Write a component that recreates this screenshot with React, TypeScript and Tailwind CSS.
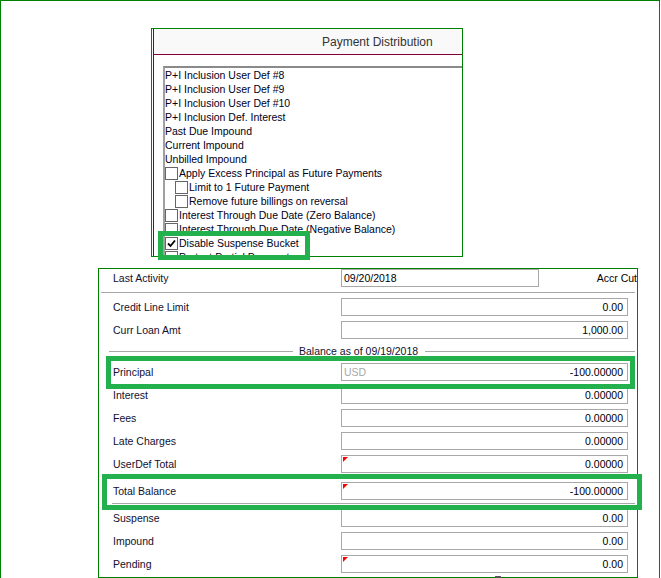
import React from 'react'

const listItems: { text: string; check?: 'none' | 'off' | 'on'; indent?: boolean }[] = [
  { text: 'P+I Inclusion User Def #8' },
  { text: 'P+I Inclusion User Def #9' },
  { text: 'P+I Inclusion User Def #10' },
  { text: 'P+I Inclusion Def. Interest' },
  { text: 'Past Due Impound' },
  { text: 'Current Impound' },
  { text: 'Unbilled Impound' },
  { text: 'Apply Excess Principal as Future Payments', check: 'off' },
  { text: 'Limit to 1 Future Payment', check: 'off', indent: true },
  { text: 'Remove future billings on reversal', check: 'off', indent: true },
  { text: 'Interest Through Due Date (Zero Balance)', check: 'off' },
  { text: 'Interest Through Due Date (Negative Balance)', check: 'off' },
  { text: 'Disable Suspense Bucket', check: 'on' },
  { text: 'Protect Partial Payments', check: 'off' },
]

function CheckBox({ on }: { on?: boolean }) {
  return (
    <div className="w-[13px] h-[13px] border border-[#666] bg-white flex items-center justify-center shrink-0">
      {on && (
        <svg width="9" height="9" viewBox="0 0 9 9">
          <path d="M1 4.5 L3.5 7 L8 1.5" fill="none" stroke="#000" strokeWidth="1.8" />
        </svg>
      )}
    </div>
  )
}

function Flag() {
  return (
    <svg className="absolute left-[1px] top-[1px]" width="5" height="5" viewBox="0 0 5 5">
      <polygon points="0,0 5,0 0,5" fill="#ff0000" />
    </svg>
  )
}

function Field({ value, flag, usd }: { value: string; flag?: boolean; usd?: boolean }) {
  return (
    <div className="relative w-[287px] h-[18px] border border-[#a8a8a8] bg-white flex items-center justify-end pr-[4px] text-black">
      {flag && <Flag />}
      {usd && <span className="absolute left-[2px] text-[#a8a8a8]">USD</span>}
      {value}
    </div>
  )
}

function Row({ label, value, flag, usd, mt = 'mt-[5px]' }: { label: string; value: string; flag?: boolean; usd?: boolean; mt?: string }) {
  return (
    <div className={`flex items-center h-[18px] ${mt}`}>
      <div className="w-[242px] pl-[14px] text-[#101030]">{label}</div>
      <Field value={value} flag={flag} usd={usd} />
    </div>
  )
}

export default function App() {
  return (
    <div className="w-[660px] h-[578px] border-l border-t border-r border-[#008000] bg-white relative overflow-hidden font-['Liberation_Sans',Arial,sans-serif] text-[10.5px] leading-[14px]">
      {/* Payment distribution panel */}
      <div className="ml-[150px] mt-[27px] w-[312px] h-[229px] border border-[#008000] overflow-hidden flex">
        <div className="ml-px w-px bg-[#80003c] shrink-0" />
        <div className="flex-1 flex flex-col min-w-0">
          <div className="h-[26px] shrink-0 bg-[#f9f9f9] border-b border-[#80003c] flex items-center pl-[168px] text-[12px] text-[#333]">
            Payment Distribution
          </div>
          <div className="ml-[9px] mt-[11px] border-t-2 border-l-2 border-t-[#8a8a8a] border-l-[#a0a0a0] flex-1 bg-white">
            {listItems.map((it, i) => (
              <div key={i} className="h-[14px] flex items-center whitespace-nowrap text-[#000020]">
                {it.check ? (
                  <>
                    <div className={it.indent ? 'ml-[10px]' : ''}>
                      <CheckBox on={it.check === 'on'} />
                    </div>
                    <span className="ml-[1px]">{it.text}</span>
                  </>
                ) : (
                  <span>{it.text}</span>
                )}
              </div>
            ))}
          </div>
        </div>
      </div>

      {/* Loan balance panel */}
      <div className="ml-[97px] mt-[11px] w-[540px] h-[310px] border border-[#008000] overflow-hidden">
        <div className="flex items-center h-[18px]">
          <div className="w-[242px] pl-[14px] text-[#101030]">Last Activity</div>
          <div className="w-[198px] h-[18px] border border-[#a8a8a8] flex items-center pl-[2px] text-black">09/20/2018</div>
          <div className="flex-1 flex justify-end whitespace-nowrap text-black">Accr Cut</div>
        </div>
        <div className="mt-[5px] mx-[2px] h-px bg-[#a8a8a8]" />
        <Row label="Credit Line Limit" value="0.00" />
        <Row label="Curr Loan Amt" value="1,000.00" />

        <div className="h-[24px] flex items-center">
          <div className="ml-[10px] w-[184px] h-px bg-[#a8a8a8]" />
          <span className="ml-[6px] text-[#101030] whitespace-nowrap">Balance as of 09/19/2018</span>
          <div className="ml-[7px] flex-1 mr-[2px] h-px bg-[#a8a8a8]" />
        </div>

        <Row label="Principal" value="-100.00000" usd mt="mt-0" />
        <Row label="Interest" value="0.00000" />
        <Row label="Fees" value="0.00000" />
        <Row label="Late Charges" value="0.00000" />
        <Row label="UserDef Total" value="0.00000" flag />
        <Row label="Total Balance" value="-100.00000" flag mt="mt-[9px]" />
        <div className="mt-[3px] ml-[13px] mr-[2px] h-px bg-[#a8a8a8]" />
        <Row label="Suspense" value="0.00" />
        <Row label="Impound" value="0.00" />
        <Row label="Pending" value="0.00" flag />
      </div>

      {/* annotation highlights */}
      <div className="absolute left-[157px] top-[230px] w-[152px] h-[29px] border-[5px] border-[#22b14c]" />
      <div className="absolute left-[105px] top-[355px] w-[529px] h-[33px] border-[5px] border-[#22b14c]" />
      <div className="absolute left-[101px] top-[473px] w-[540px] h-[36px] border-[5px] border-[#22b14c]" />
      <div className="absolute left-[494px] top-[575px] w-[6px] h-[3px] bg-[#555]" />
    </div>
  )
}
